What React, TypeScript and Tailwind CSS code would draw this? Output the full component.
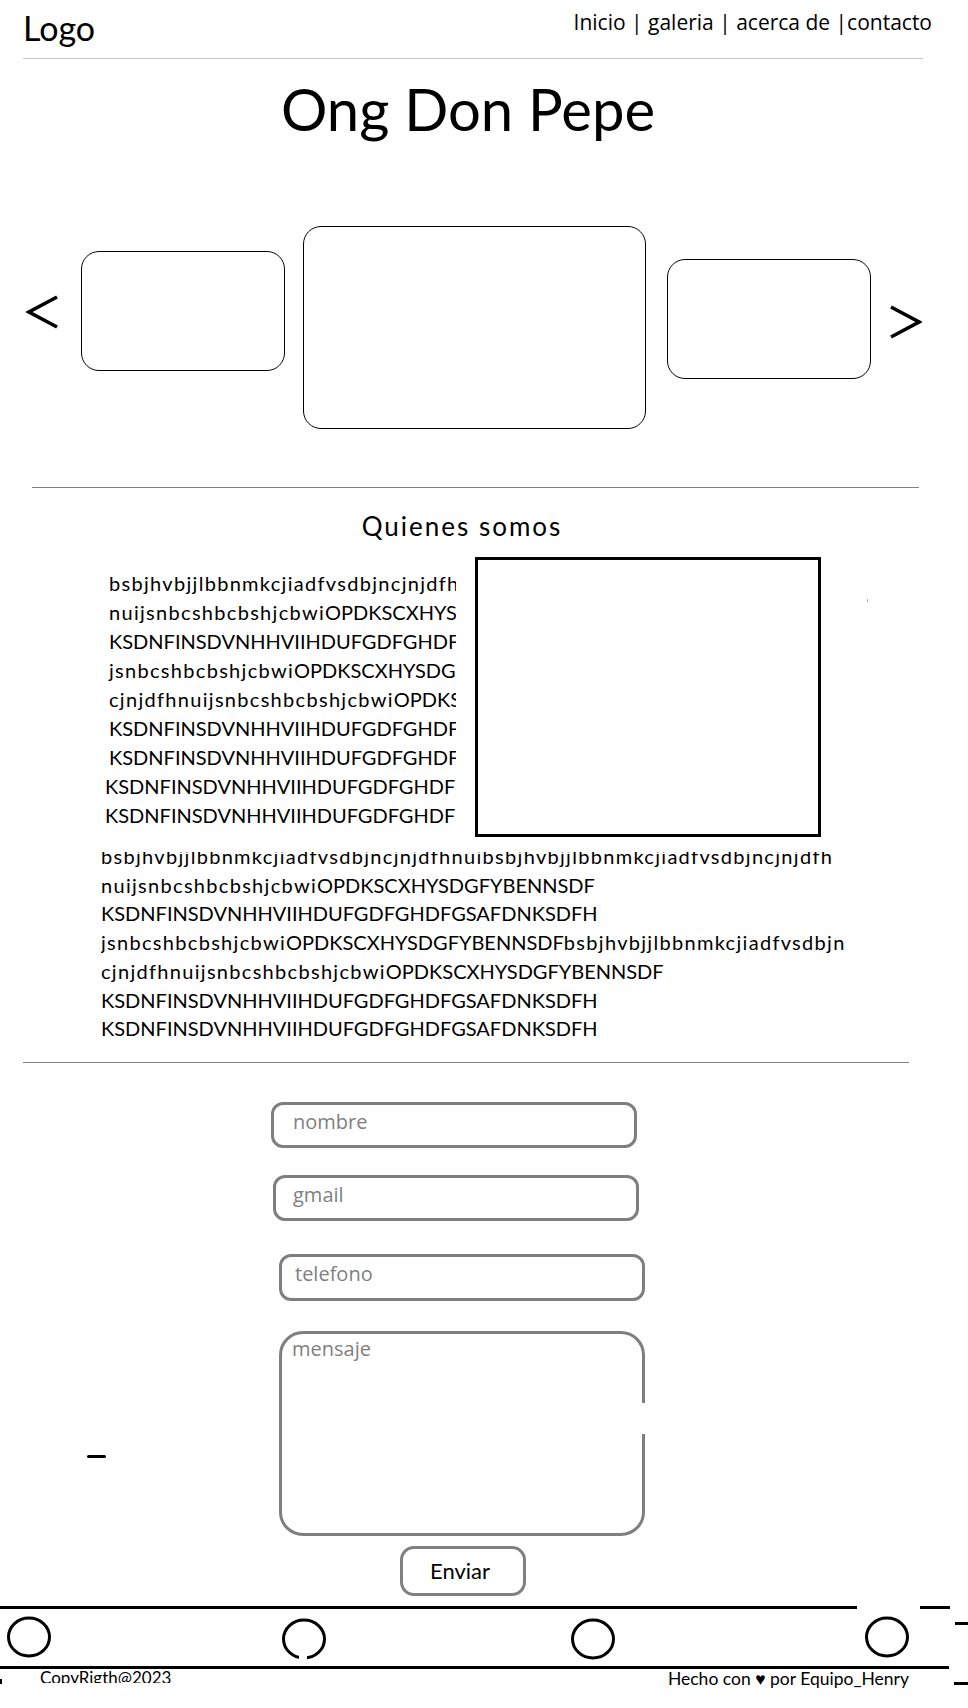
import React from 'react';

const leftLines = [
  'bsbjhvbjjlbbnmkcjiadfvsdbjncjnjdfhnuibsbjhvbjjlbbnmk',
  'nuijsnbcshbcbshjcbwiOPDKSCXHYSDGFYBENNSDF',
  'KSDNFINSDVNHHVIIHDUFGDFGHDFGSAFDNKSDFH',
  'jsnbcshbcbshjcbwiOPDKSCXHYSDGFYBENNSDF',
  'cjnjdfhnuijsnbcshbcbshjcbwiOPDKSCXHYSDGFYBENNSDF',
  'KSDNFINSDVNHHVIIHDUFGDFGHDFGSAFDNKSDFH',
  'KSDNFINSDVNHHVIIHDUFGDFGHDFGSAFDNKSDFH',
];

const bottomLines = [
  'bsbjhvbjjlbbnmkcjiadfvsdbjncjnjdfhnuibsbjhvbjjlbbnmkcjiadfvsdbjncjnjdfh',
  'nuijsnbcshbcbshjcbwiOPDKSCXHYSDGFYBENNSDF',
  'KSDNFINSDVNHHVIIHDUFGDFGHDFGSAFDNKSDFH',
  'jsnbcshbcbshjcbwiOPDKSCXHYSDGFYBENNSDFbsbjhvbjjlbbnmkcjiadfvsdbjn',
  'cjnjdfhnuijsnbcshbcbshjcbwiOPDKSCXHYSDGFYBENNSDF',
  'KSDNFINSDVNHHVIIHDUFGDFGHDFGSAFDNKSDFH',
  'KSDNFINSDVNHHVIIHDUFGDFGHDFGSAFDNKSDFH',
];

// lowercase runs get a little extra spacing so the lines keep the sketch's widths
function Line({ text }: { text: string }) {
  const parts = text.match(/[a-z]+|[^a-z]+/g) ?? [];
  return (
    <>
      {parts.map((p, i) =>
        /[a-z]/.test(p[0]) ? (
          <span key={i} className="tracking-[1.3px]">{p}</span>
        ) : (
          <span key={i}>{p}</span>
        ),
      )}
    </>
  );
}

function Circle({ gap = false }: { gap?: boolean }) {
  return (
    <svg width="46" height="44" viewBox="0 0 46 44">
      <ellipse cx="23" cy="22" rx="20.5" ry="19" fill="none" stroke="#000" strokeWidth="3" />
      {gap && <rect x="18" y="37" width="8" height="7" fill="#fff" />}
    </svg>
  );
}

export default function App() {
  return (
    <div className="relative w-[968px] min-h-[1708px] bg-white text-black font-['Lato',sans-serif] overflow-hidden">
      {/* header */}
      <header className="flex justify-between h-[58px]">
        <div className="ml-[23px] mt-[11px] text-[34px] leading-none">Logo</div>
        <nav className="mr-[36px] mt-[12px] text-[21px] leading-none font-['Open_Sans',sans-serif]">
          Inicio | galeria | acerca de |contacto
        </nav>
      </header>
      <div className="ml-[23px] w-[900px] h-px bg-[#c6c6c6]" />

      <h1 className="mt-[21px] flex justify-center pr-[32px] text-[58px] leading-none">Ong Don Pepe</h1>

      {/* carousel */}
      <section className="mt-[88px] flex items-start pl-[26px] h-[203px]">
        <svg width="34" height="40" viewBox="0 0 34 40" className="mt-[66px]">
          <polyline points="31,5 3,20 31,35" fill="none" stroke="#000" strokeWidth="3.5" />
        </svg>
        <div className="ml-[21px] mt-[25px] w-[204px] h-[120px] border-[1.5px] border-black rounded-[18px]" />
        <div className="ml-[18px] w-[343px] h-[203px] border-[1.5px] border-black rounded-[18px]" />
        <div className="ml-[21px] mt-[33px] w-[204px] h-[120px] border-[1.5px] border-black rounded-[18px]" />
        <svg width="34" height="40" viewBox="0 0 34 40" className="ml-[17px] mt-[77px]">
          <polyline points="3,4 31,19 3,34" fill="none" stroke="#000" strokeWidth="3.5" />
        </svg>
      </section>

      <div className="mt-[58px] ml-[32px] w-[887px] h-px bg-[#808080]" />

      {/* quienes somos */}
      <h2 className="mt-[25px] flex justify-center pr-[44px] text-[26px] tracking-[2px] leading-none">Quienes somos</h2>

      <div className="mt-[18px] flex items-start h-[280px]">
        <div className="ml-[105px] mt-[12px] w-[351px] overflow-hidden text-[20px] leading-[29px] whitespace-nowrap">
          {leftLines.map((l, i) => (
            <div key={i} className="pl-[4px]"><Line text={l} /></div>
          ))}
          <div>KSDNFINSDVNHHVIIHDUFGDFGHDFGSAFDNKSDFH</div>
          <div>KSDNFINSDVNHHVIIHDUFGDFGHDFGSAFDNKSDFH</div>
        </div>
        <div className="ml-[19px] w-[346px] h-[280px] border-[3px] border-black" />
        <div className="ml-[46px] mt-[42px] w-px h-[3px] bg-[#b0b0b0]" />
      </div>

      <div className="mt-[15px] ml-[101px] h-[190px] overflow-hidden">
        <div className="-mt-[10px] text-[20px] leading-[28.7px] whitespace-nowrap">
          {bottomLines.map((l, i) => (
            <div key={i}><Line text={l} /></div>
          ))}
        </div>
      </div>

      <div className="mt-[20px] ml-[23px] w-[886px] h-px bg-[#808080]" />

      {/* form */}
      <form className="flex flex-col font-['Open_Sans',sans-serif] text-[20px] text-[#7f7f7f]">
        <div className="mt-[39px] ml-[271px] w-[366px] h-[46px] border-[3px] border-[#7f7f7f] rounded-[12px] pl-[19px] pt-[7px] leading-none">
          nombre
        </div>
        <div className="mt-[27px] ml-[273px] w-[366px] h-[46px] border-[3px] border-[#7f7f7f] rounded-[12px] pl-[17px] pt-[7px] leading-none">
          gmail
        </div>
        <div className="mt-[33px] ml-[279px] w-[366px] h-[47px] border-[3px] border-[#7f7f7f] rounded-[12px] pl-[13px] pt-[7px] leading-none">
          telefono
        </div>
        <div className="relative mt-[30px] ml-[279px] w-[366px] h-[205px] border-[3px] border-[#7f7f7f] rounded-[24px] pl-[10px] pt-[5px] leading-none">
          mensaje
          <div className="absolute right-[-3px] top-[69px] w-[3px] h-[31px] bg-white" />
        </div>
        <div className="mt-[10px] ml-[400px] w-[126px] h-[50px] border-[3px] border-[#808080] rounded-[14px] flex items-center justify-center pr-[6px] text-black font-['Lato',sans-serif] text-[22px] leading-none">
          Enviar
        </div>
      </form>

      {/* stray mark */}
      <div className="absolute left-[87px] top-[1455px] w-[19px] h-[3px] bg-black rounded-full" />

      {/* footer */}
      <footer className="mt-[10px]">
        <div className="flex">
          <div className="w-[857px] h-[3px] bg-black" />
          <div className="ml-[63px] w-[30px] h-[3px] bg-black" />
        </div>
        <div className="flex items-start h-[57px]">
          <div className="ml-[6px] mt-[6px]"><Circle /></div>
          <div className="ml-[229px] mt-[8px]"><Circle gap /></div>
          <div className="ml-[243px] mt-[8px]"><Circle /></div>
          <div className="ml-[248px] mt-[6px]"><Circle /></div>
          <div className="ml-[45px] mt-[13px] w-[14px] h-[3px] bg-black" />
        </div>
        <div className="w-[949px] h-[3px] bg-black" />
        <div className="flex items-start">
          <div className="mt-[10px] w-[2px] h-[5px] bg-black" />
          <div className="ml-[38px] mt-[1px] h-[13px] overflow-hidden text-[17px] leading-none">
            <div className="-mt-[1px]">CopyRigth@2023</div>
          </div>
          <div className="ml-auto mt-[1px] text-[17.5px] leading-none">Hecho con ♥ por Equipo_Henry</div>
          <div className="ml-[45px] mt-[13px] w-[14px] h-[3px] bg-black" />
        </div>
      </footer>
    </div>
  );
}
